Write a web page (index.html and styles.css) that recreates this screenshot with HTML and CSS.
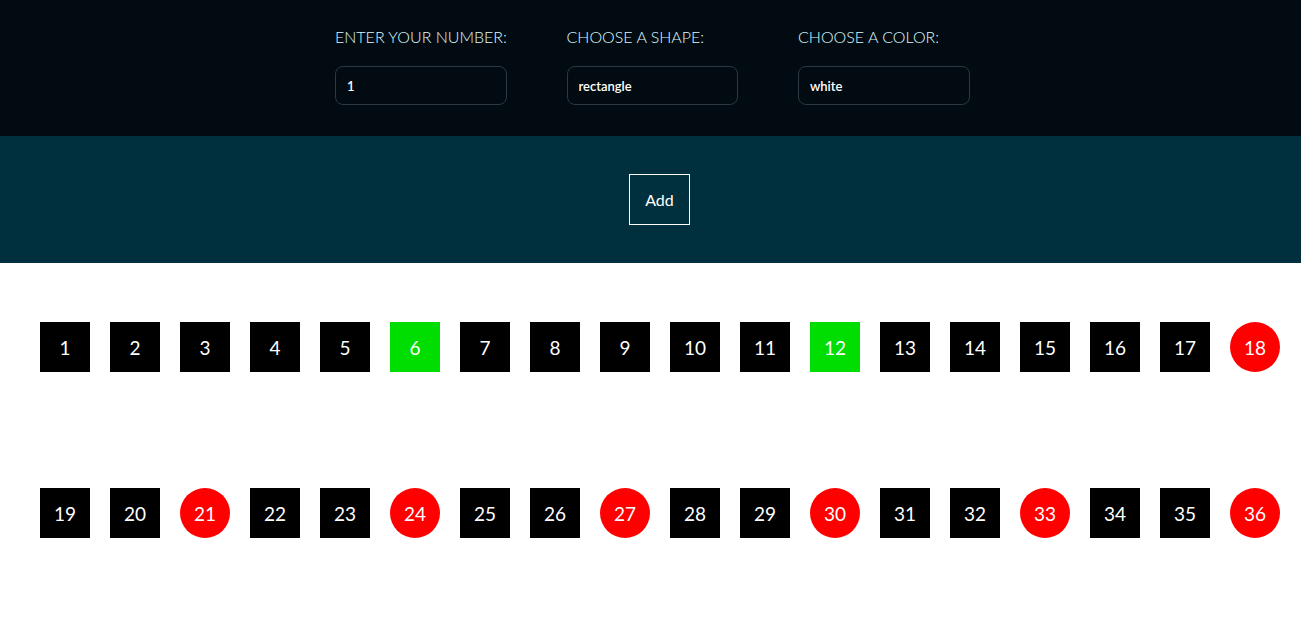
FILE: index.html
```html
<!DOCTYPE html>
<html>
<head>
<meta charset="utf-8">
<link rel="stylesheet" href="styles.css">
</head>
<body>
<header class="controls">
  <div class="field">
    <label class="label">Enter your number:</label>
    <input class="input" type="text" value="1">
  </div>
  <div class="field">
    <label class="label">Choose a shape:</label>
    <input class="input" type="text" value="rectangle">
  </div>
  <div class="field">
    <label class="label">Choose a color:</label>
    <input class="input" type="text" value="white">
  </div>
</header>
<section class="actions">
  <button class="add-btn">Add</button>
</section>
<main class="board">
  <div class="tile">1</div>
  <div class="tile">2</div>
  <div class="tile">3</div>
  <div class="tile">4</div>
  <div class="tile">5</div>
  <div class="tile green">6</div>
  <div class="tile">7</div>
  <div class="tile">8</div>
  <div class="tile">9</div>
  <div class="tile">10</div>
  <div class="tile">11</div>
  <div class="tile green">12</div>
  <div class="tile">13</div>
  <div class="tile">14</div>
  <div class="tile">15</div>
  <div class="tile">16</div>
  <div class="tile">17</div>
  <div class="tile circle">18</div>
  <div class="tile">19</div>
  <div class="tile">20</div>
  <div class="tile circle">21</div>
  <div class="tile">22</div>
  <div class="tile">23</div>
  <div class="tile circle">24</div>
  <div class="tile">25</div>
  <div class="tile">26</div>
  <div class="tile circle">27</div>
  <div class="tile">28</div>
  <div class="tile">29</div>
  <div class="tile circle">30</div>
  <div class="tile">31</div>
  <div class="tile">32</div>
  <div class="tile circle">33</div>
  <div class="tile">34</div>
  <div class="tile">35</div>
  <div class="tile circle">36</div>
</main>
</body>
</html>
```
FILE: styles.css
```css
* { box-sizing: border-box; }
html, body { margin: 0; padding: 0; }
body {
  font-family: Lato, "Open Sans", sans-serif;
  background: #fff;
}
.controls {
  background: #020a12;
  height: 136px;
  display: flex;
  gap: 60px;
  padding: 28px 0 0 335px;
}
.field {
  display: flex;
  flex-direction: column;
  width: 171.5px;
}
.label {
  color: #dcfaff;
  font-size: 16px;
  font-weight: 300;
  text-transform: uppercase;
  line-height: 18px;
  white-space: nowrap;
}
.input {
  margin-top: 20px;
  height: 39px;
  width: 100%;
  background: #020a12;
  border: 1px solid #2b3a40;
  border-radius: 8px;
  color: #fff;
  font-family: Lato, sans-serif;
  font-size: 13px;
  font-weight: 600;
  padding: 0 11px;
  outline: none;
}
.actions {
  background: #002f3d;
  height: 127px;
  display: flex;
  justify-content: center;
  align-items: center;
  padding-left: 18px;
}
.add-btn {
  background: transparent;
  border: 1px solid #fff;
  color: #fff;
  font-family: Lato, sans-serif;
  font-size: 16px;
  height: 51px;
  width: 61px;
  padding: 0;
}
.board {
  display: grid;
  grid-template-columns: repeat(18, 50px);
  column-gap: 20px;
  row-gap: 116px;
  padding: 59px 40px 0;
}
.tile {
  width: 50px;
  height: 50px;
  background: #000;
  color: #fff;
  font-size: 19px;
  display: flex;
  align-items: center;
  justify-content: center;
}
.tile.green { background: #00dd00; }
.tile.circle { background: #ff0000; border-radius: 50%; }
```
